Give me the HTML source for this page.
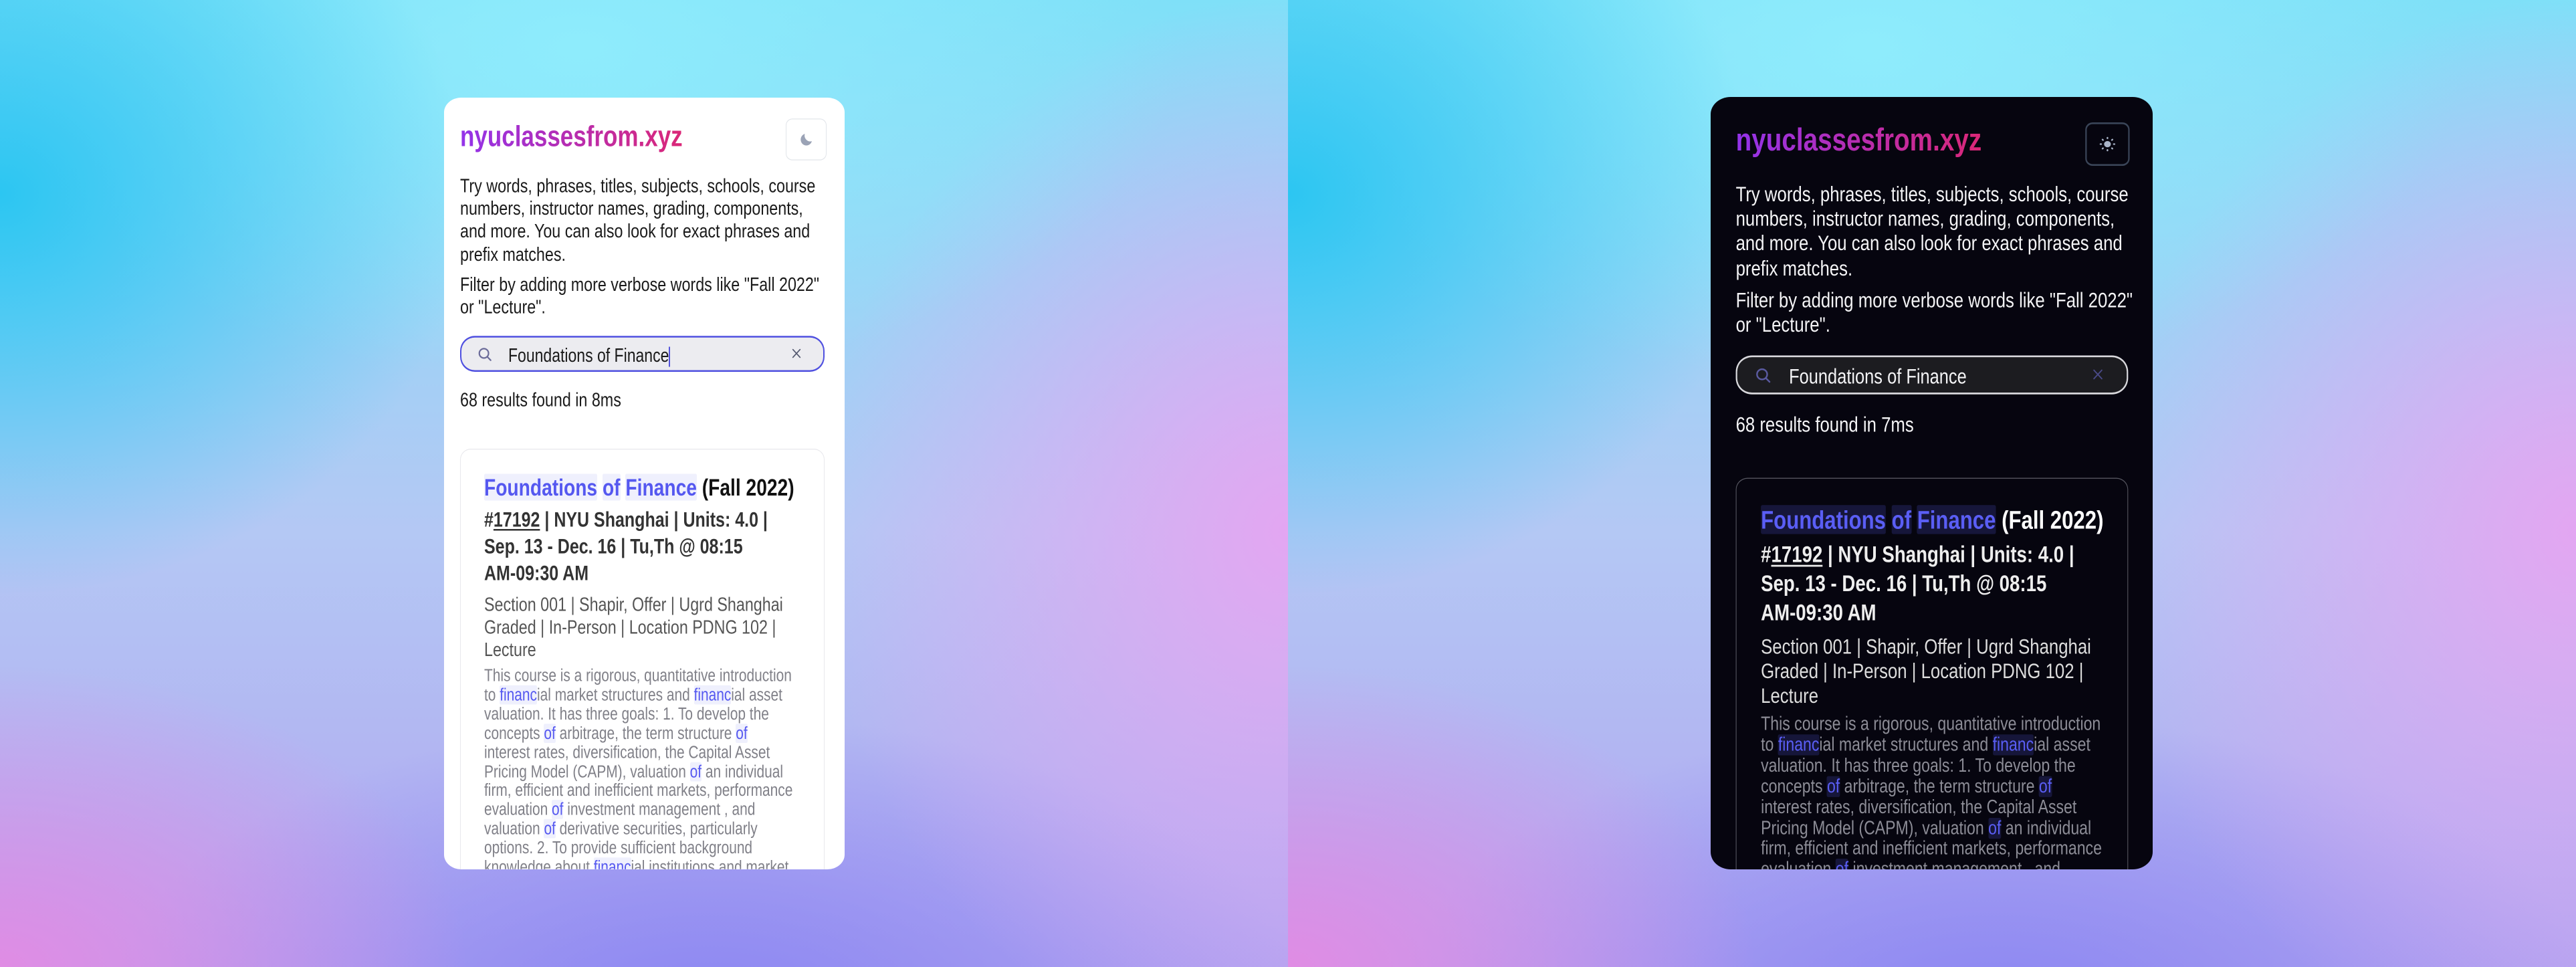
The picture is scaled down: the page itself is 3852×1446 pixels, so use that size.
<!DOCTYPE html>
<html><head><meta charset="utf-8"><style>
*{margin:0;padding:0;box-sizing:border-box}
html,body{width:3852px;height:1446px;overflow:hidden}
body{position:relative;font-family:"Liberation Sans",Arial,sans-serif}
.half{position:absolute;top:0;height:1446px;width:1926px;overflow:hidden;
background:
radial-gradient(ellipse 700px 600px at 0% 20%,#2cc6f2 0%,rgba(44,198,242,0) 100%),
radial-gradient(ellipse 900px 500px at 45% 5%,#8eecfc 0%,rgba(142,236,252,0) 100%),
radial-gradient(ellipse 700px 800px at 100% 55%,#e3a6f2 0%,rgba(227,166,242,0) 100%),
radial-gradient(ellipse 700px 450px at 0% 100%,#e08ce4 0%,rgba(224,140,228,0) 100%),
radial-gradient(ellipse 900px 450px at 55% 105%,#8a86f2 0%,rgba(138,134,242,0) 100%),
linear-gradient(180deg,#7fe0f8 0%,#b4c8f4 55%,#b0a4f0 100%);}
.h1{left:0}.h2{left:1926px}
.card{position:absolute;overflow:hidden}
.inner{position:absolute;left:0;top:0;width:598px;transform-origin:0 0;overflow:hidden}
.abs{position:absolute;white-space:nowrap}
.logo{font-weight:bold;font-size:35px;line-height:40px;left:24px;top:27px;
background:linear-gradient(90deg,#9333ea,#db2777);-webkit-background-clip:text;background-clip:text;color:transparent}
.btn{left:511px;top:25px;width:61px;height:49.6px;border-radius:10px/8px;display:flex;align-items:center;justify-content:center}
.p{left:24px;font-size:23.3px;line-height:27.2px}
.search{left:24px;top:284.8px;width:545px;height:43px;border-radius:22px/18px}
.search .q{position:absolute;left:70px;top:0;line-height:43px;font-size:23px}
.search svg{position:absolute}
.rc{left:24px;top:420px;width:545px;height:520px;border-radius:16px/13px}
.rc .t{left:35px;top:29px;font-size:28.2px;font-weight:bold;line-height:32px}
.rc .l2{left:35px;top:68px;font-size:25px;font-weight:bold;line-height:32px}
.rc .sec{left:35px;top:171.5px;font-size:23.3px;line-height:27px}
.rc .d{left:35px;top:260px;font-size:20.9px;line-height:22.9px}
.hl{border-radius:2px}
.light .card{background:#fff}
.light{color:#1a1a1a}
.light .btn{border:1.5px solid #e2e5ea}
.light .search{background:#ececf0;border:2.5px solid #4f50e0}
.light .rc{border:1.5px solid #e8e8ec;background:#fff}
.light .rc .t{color:#111}
.light .rc .l2{color:#333}
.light .rc .sec{color:#555}
.light .rc .d{color:#808088}
.light .hl{color:#5558f0;background:#eff0fd}
.dark .card{background:#06050f}
.dark{color:#f4f4f6}
.dark .logo,.dark .p{left:34px}
.dark .search,.dark .rc{left:34px;width:531px}
.dark .search svg:last-child{left:480px!important}
.dark .rc .t,.dark .rc .l2,.dark .rc .sec,.dark .rc .d{left:33px}
.dark .btn{border:2.5px solid #3a4558}
.dark .search{background:#1c1c20;border:2.5px solid #d8d8dc}
.dark .rc{border:1px solid #55555f;background:#06050f}
.dark .rc .t{color:#fff}
.dark .rc .l2{color:#eee}
.dark .rc .sec{color:#ddd}
.dark .rc .d{color:#8c8c96}
.dark .hl{color:#5a5ef5;background:#16163a}
u{text-decoration-thickness:1.5px;text-underline-offset:3px}
</style></head><body>
<div class="half h1"></div>
<div class="half h2"></div>

<div class="light">
<div class="card" style="left:664px;top:146px;width:599px;height:1154px;border-radius:26px/22px">
<div class="inner" style="transform:scale(1,1.25);height:923px">
 <div class="abs logo">nyuclassesfrom.xyz</div>
 <div class="abs btn"><svg width="24" height="20" viewBox="0 0 24 24" preserveAspectRatio="none"><path d="M20 14.5A8.5 8.5 0 0 1 9.5 4 8.5 8.5 0 1 0 20 14.5Z" fill="#9ba3b6"/></svg></div>
 <div class="abs p" style="top:92px">Try words, phrases, titles, subjects, schools, course<br>numbers, instructor names, grading, components,<br>and more. You can also look for exact phrases and<br>prefix matches.</div>
 <div class="abs p" style="top:210px">Filter by adding more verbose words like "Fall 2022"<br>or "Lecture".</div>
 <div class="abs search">
  <svg style="left:24px;top:11px" width="22" height="18" viewBox="0 0 24 24" preserveAspectRatio="none"><circle cx="10.5" cy="10.5" r="7.5" fill="none" stroke="#6b6b99" stroke-width="2.4"/><path d="M16 16l5.5 5.5" stroke="#6b6b99" stroke-width="2.4" stroke-linecap="round"/></svg>
  <div class="q">Foundations of Finance<span style="display:inline-block;width:2px;height:24px;background:#5555dd;vertical-align:middle"></span></div>
  <svg style="left:493px;top:12px" width="16" height="14" viewBox="0 0 24 24" preserveAspectRatio="none"><path d="M4 4L20 20M20 4L4 20" stroke="#555a70" stroke-width="2.5" stroke-linecap="round"/></svg>
 </div>
 <div class="abs p" style="top:348px">68 results found in 8ms</div>
 <div class="abs rc">
  <div class="abs t"><span class="hl">Foundations</span> <span class="hl">of</span> <span class="hl">Finance</span> (Fall 2022)</div>
  <div class="abs l2">#<u>17192</u> | NYU Shanghai | Units: 4.0 |<br>Sep. 13 - Dec. 16 | Tu,Th @ 08:15<br>AM-09:30 AM</div>
  <div class="abs sec">Section 001 | Shapir, Offer | Ugrd Shanghai<br>Graded | In-Person | Location PDNG 102 |<br>Lecture</div>
  <div class="abs d">This course is a rigorous, quantitative introduction<br>to <span class="hl">financ</span>ial market structures and <span class="hl">financ</span>ial asset<br>valuation. It has three goals: 1. To develop the<br>concepts <span class="hl">of</span> arbitrage, the term structure <span class="hl">of</span><br>interest rates, diversification, the Capital Asset<br>Pricing Model (CAPM), valuation <span class="hl">of</span> an individual<br>firm, efficient and inefficient markets, performance<br>evaluation <span class="hl">of</span> investment management , and<br>valuation <span class="hl">of</span> derivative securities, particularly<br>options. 2. To provide sufficient background<br>knowledge about <span class="hl">financ</span>ial institutions and market</div>
 </div>
</div>
</div>
</div>

<div class="dark">
<div class="card" style="left:2558px;top:145px;width:661px;height:1155px;border-radius:30px/26px">
<div class="inner" style="transform:scale(1.105,1.356);height:852px">
 <div class="abs logo" style="top:28px">nyuclassesfrom.xyz</div>
 <div class="abs btn" style="left:507px;width:60px;top:28px;height:48px"><svg width="24" height="18" viewBox="0 0 24 24" preserveAspectRatio="none"><circle cx="12" cy="12" r="4.6" fill="#a9b4c8"/><g stroke="#a9b4c8" stroke-width="2.2" stroke-linecap="round"><path d="M12 2.5v1M12 20.5v1M2.5 12h1M20.5 12h1M5.3 5.3l.7.7M18 18l.7.7M5.3 18.7l.7-.7M18 6l.7-.7"/></g></svg></div>
 <div class="abs p" style="top:94px">Try words, phrases, titles, subjects, schools, course<br>numbers, instructor names, grading, components,<br>and more. You can also look for exact phrases and<br>prefix matches.</div>
 <div class="abs p" style="top:211px">Filter by adding more verbose words like "Fall 2022"<br>or "Lecture".</div>
 <div class="abs search">
  <svg style="left:24px;top:11px" width="22" height="18" viewBox="0 0 24 24" preserveAspectRatio="none"><circle cx="10.5" cy="10.5" r="7.5" fill="none" stroke="#5a5aa0" stroke-width="2.4"/><path d="M16 16l5.5 5.5" stroke="#5a5aa0" stroke-width="2.4" stroke-linecap="round"/></svg>
  <div class="q">Foundations of Finance</div>
  <svg style="left:493px;top:12px" width="16" height="14" viewBox="0 0 24 24" preserveAspectRatio="none"><path d="M4 4L20 20M20 4L4 20" stroke="#4a4a88" stroke-width="2.5" stroke-linecap="round"/></svg>
 </div>
 <div class="abs p" style="top:348px">68 results found in 7ms</div>
 <div class="abs rc">
  <div class="abs t"><span class="hl">Foundations</span> <span class="hl">of</span> <span class="hl">Finance</span> (Fall 2022)</div>
  <div class="abs l2">#<u>17192</u> | NYU Shanghai | Units: 4.0 |<br>Sep. 13 - Dec. 16 | Tu,Th @ 08:15<br>AM-09:30 AM</div>
  <div class="abs sec">Section 001 | Shapir, Offer | Ugrd Shanghai<br>Graded | In-Person | Location PDNG 102 |<br>Lecture</div>
  <div class="abs d">This course is a rigorous, quantitative introduction<br>to <span class="hl">financ</span>ial market structures and <span class="hl">financ</span>ial asset<br>valuation. It has three goals: 1. To develop the<br>concepts <span class="hl">of</span> arbitrage, the term structure <span class="hl">of</span><br>interest rates, diversification, the Capital Asset<br>Pricing Model (CAPM), valuation <span class="hl">of</span> an individual<br>firm, efficient and inefficient markets, performance<br>evaluation <span class="hl">of</span> investment management , and<br>valuation <span class="hl">of</span> derivative securities, particularly</div>
 </div>
</div>
</div>
</div>
</body></html>
